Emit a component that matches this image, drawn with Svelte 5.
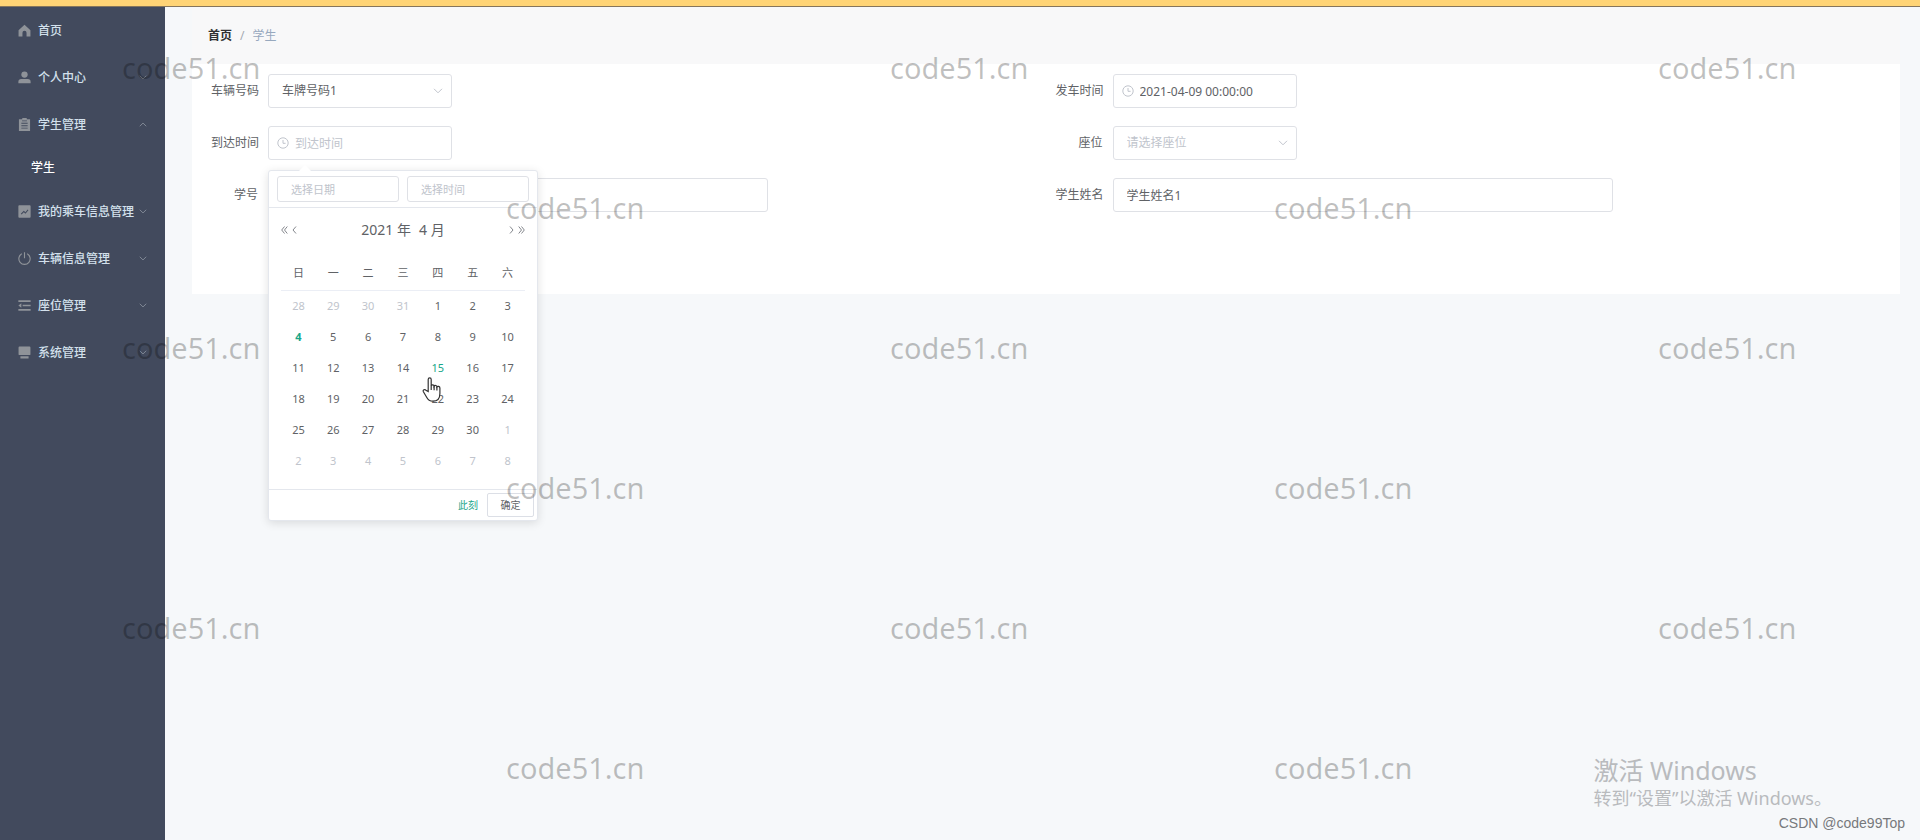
<script lang="ts">
  type MenuItem = { label: string; icon: string; open?: boolean; plain?: boolean; children?: string[] };

  const menu: MenuItem[] = [
    { label: '首页', icon: 'home', plain: true },
    { label: '个人中心', icon: 'user' },
    { label: '学生管理', icon: 'order', open: true, children: ['学生'] },
    { label: '我的乘车信息管理', icon: 'chart' },
    { label: '车辆信息管理', icon: 'power' },
    { label: '座位管理', icon: 'fold' },
    { label: '系统管理', icon: 'platform' }
  ];

  const weekdays = ['日', '一', '二', '三', '四', '五', '六'];

  // april 2021 starts on a thursday
  const weeks = Array.from({ length: 6 }, (_, w) =>
    Array.from({ length: 7 }, (_, d) => {
      const n = w * 7 + d - 3;
      if (n < 1) return { day: n + 31, other: true };
      if (n > 30) return { day: n - 30, other: true };
      return { day: n, other: false };
    })
  );

  const marks = [3, 2, 3, 2, 3, 2];

  let plate = $state('车牌号码1');
  let departAt = $state('2021-04-09 00:00:00');
  let arriveAt = $state('');
  let seat = $state('');
  let studentNo = $state('');
  let studentName = $state('学生姓名1');
  let pickDate = $state('');
  let pickTime = $state('');
</script>

{#snippet clock()}
  <svg class="clock" viewBox="0 0 12 12" aria-hidden="true">
    <circle cx="6" cy="6" r="5.2" />
    <path d="M6 3v3.3h2.6" />
  </svg>
{/snippet}

{#snippet arrow()}
  <svg class="arrow" viewBox="0 0 10 6" aria-hidden="true"><path d="M1 .8 5 4.8 9 .8" /></svg>
{/snippet}

<div class="page">
  <div class="topbar"></div>

  <div class="body">
    <nav class="sidebar">
      {#each menu as item (item.label)}
        <a class="item" href="#{item.icon}">
          <svg class="icon" viewBox="0 0 14 14" aria-hidden="true">
            {#if item.icon === 'home'}
              <path d="M7 .8 0.6 6.8V13.4H4.8V9.4a2.2 2.2 0 0 1 4.4 0v4H13.4V6.8z" />
            {:else if item.icon === 'user'}
              <circle cx="7" cy="3.9" r="3.4" />
              <path d="M.4 13.2v-1.600c0-2 1.200-3 3-3h7.200c1.800 0 3 1 3 3v1.600z" />
            {:else if item.icon === 'order'}
              <path fill-rule="evenodd" d="M4.6 0h4.8v1.4H13V14H1V1.4h3.6zM3.6 5.2v1h6.8v-1zm0 2.6v1h6.8v-1zm0 2.6v1h6.8v-1zM4.4 2.6v.8h5.2v-.8z" />
            {:else if item.icon === 'chart'}
              <path fill-rule="evenodd" d="M1.4.4h11.2q1 0 1 1v11.2q0 1-1 1H1.4q-1 0-1-1V1.4q0-1 1-1zM3 9.4l.8.8 2.5-2.5L8 9.3l3.2-3.7-.8-.7L8 7.7 6.2 6.1z" />
            {:else if item.icon === 'power'}
              <path class="line" d="M4.2 1.8a6.1 6.1 0 1 0 5.6 0M7 .4V6.8" />
            {:else if item.icon === 'fold'}
              <path d="M.4 1.4h13.2v1.7H.4zM5 6.1h8.6v1.7H5zM.4 10.9h13.2v1.7H.4zM3.6 4.6v4.8L.4 7z" />
            {:else}
              <path d="M1.6.6h10.8q1 0 1 1v7.2q0 1-1 1H1.6q-1 0-1-1V1.6q0-1 1-1zM2.6 11h8.8v2.4H2.6z" />
            {/if}
          </svg>
          <span>{item.label}</span>
          {#if !item.plain}
            <svg class="caret" class:up={item.open} viewBox="0 0 10 6" aria-hidden="true">
              <path d="M1 .8 5 4.8 9 .8" />
            </svg>
          {/if}
        </a>
        {#each item.children ?? [] as child (child)}
          <a class="child" href="#student">{child}</a>
        {/each}
      {/each}
    </nav>

    <main>
      <div class="crumbs">
        <a href="#home">首页</a>
        <span class="sep">/</span>
        <span>学生</span>
      </div>

      <form class="panel">
        <div class="field">
          <label for="plate">车辆号码</label>
          <div class="control short">
            <select id="plate" bind:value={plate}>
              <option>车牌号码1</option>
            </select>
            {@render arrow()}
          </div>
        </div>

        <div class="field">
          <label for="depart">发车时间</label>
          <div class="control short">
            {@render clock()}
            <input id="depart" class="timed" bind:value={departAt} />
          </div>
        </div>

        <div class="field">
          <label for="arrive">到达时间</label>
          <div class="control short">
            {@render clock()}
            <input id="arrive" class="timed" placeholder="到达时间" bind:value={arriveAt} />

            <div class="picker">
              <div class="picker-top">
                <input aria-label="选择日期" placeholder="选择日期" bind:value={pickDate} />
                <input aria-label="选择时间" placeholder="选择时间" bind:value={pickTime} />
              </div>
              <div class="picker-body">
                <div class="month">
                  <button type="button" aria-label="上一年">
                    <svg viewBox="0 0 7 8"><path d="M3.5.5 .7 4l2.8 3.5M6.3.5 3.5 4l2.8 3.5" /></svg>
                  </button>
                  <button type="button" aria-label="上个月">
                    <svg viewBox="0 0 7 8"><path d="M5 .5 2 4l3 3.5" /></svg>
                  </button>
                  <div class="title"><span>2021 年</span><span>4 月</span></div>
                  <button type="button" aria-label="下个月">
                    <svg viewBox="0 0 7 8"><path d="M2 .5 5 4 2 7.5" /></svg>
                  </button>
                  <button type="button" aria-label="下一年">
                    <svg viewBox="0 0 7 8"><path d="M.7.5 3.5 4 .7 7.5M3.5.5 6.3 4 3.5 7.5" /></svg>
                  </button>
                </div>
                <table>
                  <thead>
                    <tr>
                      {#each weekdays as d (d)}<th>{d}</th>{/each}
                    </tr>
                  </thead>
                  <tbody>
                    {#each weeks as week, i (i)}
                      <tr>
                        {#each week as c (c.day)}
                          <td>
                            <button
                              type="button"
                              class:other={c.other}
                              class:today={!c.other && c.day === 4}
                              class:hover={!c.other && c.day === 15}
                            >{c.day}</button>
                            {#if c.day === 15}
                              <svg class="hand" viewBox="0 0 20 25" aria-hidden="true">
                                <path d="M6.2 14.5V2.6c0-2.2 3-2.2 3 0v6.2c.4-1.5 2.8-1.3 2.9.4.6-1.2 2.7-.9 2.8.6.7-.9 3-.6 3 1.3v5.3c0 4.6-2.4 7.8-7 7.8-3.4 0-5.2-1.8-6.4-4.2L1.4 14.8c-.9-1.9 1.4-3 2.500-1.600z" />
                                <path d="M9.2 8.6v4.4M12.1 9.2v4M14.9 9.8v3.6" />
                              </svg>
                            {/if}
                          </td>
                        {/each}
                      </tr>
                    {/each}
                  </tbody>
                </table>
              </div>
              <div class="picker-foot">
                <button type="button" class="now">此刻</button>
                <button type="button" class="ok">确定</button>
              </div>
            </div>
          </div>
        </div>

        <div class="field">
          <label for="seat">座位</label>
          <div class="control short">
            <select id="seat" class:empty={!seat} bind:value={seat}>
              <option value="">请选择座位</option>
            </select>
            {@render arrow()}
          </div>
        </div>

        <div class="field">
          <label for="no">学号</label>
          <div class="control long"><input id="no" bind:value={studentNo} /></div>
        </div>

        <div class="field">
          <label for="name">学生姓名</label>
          <div class="control long"><input id="name" bind:value={studentName} /></div>
        </div>
      </form>
    </main>
  </div>

  <div class="marks" aria-hidden="true">
    {#each marks as count, i (i)}
      <div class="mark-row" class:shifted={i % 2 === 1}>
        {#each { length: count } as _}
          <span>code51.cn</span>
        {/each}
      </div>
    {/each}
  </div>

  <div class="activate">
    <div class="big">激活 Windows</div>
    <div>转到“设置”以激活 Windows。</div>
  </div>
  <div class="credit">CSDN @code99Top</div>
</div>

<style>
  :global(body) { margin: 0; }

  .page {
    position: relative;
    display: flex;
    flex-direction: column;
    min-height: 100vh;
    overflow: hidden;
    background: #f6f8fa;
    color: #606266;
    font-family: "Noto Sans", "Noto Sans CJK SC", sans-serif;
    font-size: 12px;
    line-height: 16px;
  }
  .page * { box-sizing: border-box; }
  a { color: inherit; text-decoration: none; }
  button, input, select { margin: 0; font: inherit; color: inherit; }
  button { padding: 0; border: 0; background: none; }

  .topbar { height: 7px; background: #ffd476; border-bottom: 1px solid #85755c; }
  .body { display: flex; flex: 1; }

  .sidebar { flex: none; width: 165px; background: #424a5d; color: #d3e0ec; font-weight: 500; }
  .item { display: flex; align-items: center; height: 47px; padding: 0 18px; white-space: nowrap; }
  .icon { flex: none; width: 13px; height: 13px; margin-right: 7px; fill: #8f9399; }
  .icon .line { fill: none; stroke: #8f9399; stroke-width: 1.2; }
  .caret { flex: none; width: 8px; height: 5px; margin-left: auto; fill: none; stroke: #858c99; stroke-width: 1.2; }
  .caret.up { transform: rotate(180deg); }
  .child { display: flex; align-items: center; height: 40px; padding-left: 31px; color: #fff; }

  main { flex: 1; min-width: 0; padding: 0 20px 0 27px; }
  .crumbs { display: flex; align-items: center; height: 57px; padding-left: 16px; background: #f8f8f9; color: #97a8be; }
  .crumbs a { color: #303133; font-weight: 700; }
  .sep { margin: 0 8px; color: #a5aab3; }

  .panel {
    display: grid;
    grid-template-columns: 1fr 1fr;
    gap: 18px 0;
    padding: 10px 0 82px 19px;
    background: #fff;
  }
  .field { display: flex; align-items: center; }
  label { flex: none; width: 57px; padding-right: 10px; text-align: right; white-space: nowrap; }
  .control { position: relative; height: 34px; }
  .short { width: 184px; }
  .long { width: 500px; max-width: 100%; }

  input, select {
    width: 100%;
    height: 100%;
    padding: 0 13px;
    border: 1px solid #dfe1e6;
    border-radius: 3px;
    background: #fff;
    outline: none;
    appearance: none;
  }
  .timed { padding-left: 26px; }
  input::placeholder { color: #c0c4cc; opacity: 1; }
  select.empty { color: #c0c4cc; }
  .clock, .arrow { position: absolute; top: 0; bottom: 0; margin: auto 0; fill: none; stroke: #c0c4cc; }
  .clock { left: 9px; width: 12px; height: 12px; }
  .arrow { right: 9px; width: 10px; height: 6px; }

  .picker {
    position: absolute;
    z-index: 2;
    top: 44px;
    left: 0;
    width: 270px;
    border: 1px solid #e4e7ed;
    border-radius: 3px;
    background: #fff;
    box-shadow: 0 2px 10px rgba(0, 0, 0, .12);
    font-size: 11px;
  }
  .picker::before {
    content: '';
    position: absolute;
    top: -6px;
    left: 30px;
    border: 6px solid transparent;
    border-top: 0;
    border-bottom-color: #fff;
  }
  .picker-top { display: flex; gap: 8px; padding: 5px 8px; border-bottom: 1px solid #e4e7ed; }
  .picker-top input { height: 26px; }
  .picker-body { padding: 0 12px 13px; }
  .month { display: flex; align-items: center; gap: 3px; height: 44px; }
  .month button { width: 7px; height: 16px; }
  .month svg { display: block; width: 7px; height: 8px; fill: none; stroke: #84878d; }
  .title { display: flex; flex: 1; justify-content: center; gap: 8px; font-size: 14px; }

  table { width: 100%; border-collapse: collapse; table-layout: fixed; }
  th, td { padding: 0; text-align: center; }
  th { height: 38px; padding-top: 4px; border-bottom: 1px solid #ebeef5; font-weight: 400; }
  td { position: relative; height: 31px; }
  td button { width: 24px; height: 24px; }
  .other { color: #c0c4cc; }
  .today { color: #18a689; font-weight: 700; }
  .hover { color: #18a689; }
  .hand { position: absolute; z-index: 1; top: 25px; left: 2px; width: 20px; height: 25px; fill: #fff; stroke: #333; stroke-width: 1.2; }

  .picker-foot { display: flex; align-items: center; justify-content: flex-end; gap: 9px; padding: 3px; border-top: 1px solid #e4e7ed; font-size: 10px; }
  .now { color: #18a689; }
  .ok { width: 47px; height: 24px; border: 1px solid #dcdfe6; border-radius: 2px; background: #fff; }

  .marks { position: absolute; z-index: 3; inset: 0; overflow: hidden; pointer-events: none; color: rgba(0, 0, 0, .25); font-size: 29px; line-height: 136px; }
  .mark-row { display: flex; height: 140px; padding-left: 122px; }
  .mark-row.shifted { padding-left: 506px; }
  .mark-row span { flex: 0 0 768px; }

  .activate { position: absolute; right: 88px; bottom: 30px; color: #b9bbbe; font-size: 18px; line-height: 24px; }
  .big { font-size: 25px; line-height: 32px; }
  .credit { position: absolute; right: 15px; bottom: 9px; color: #77797c; font-family: "Liberation Sans", sans-serif; font-size: 14px; }
</style>
